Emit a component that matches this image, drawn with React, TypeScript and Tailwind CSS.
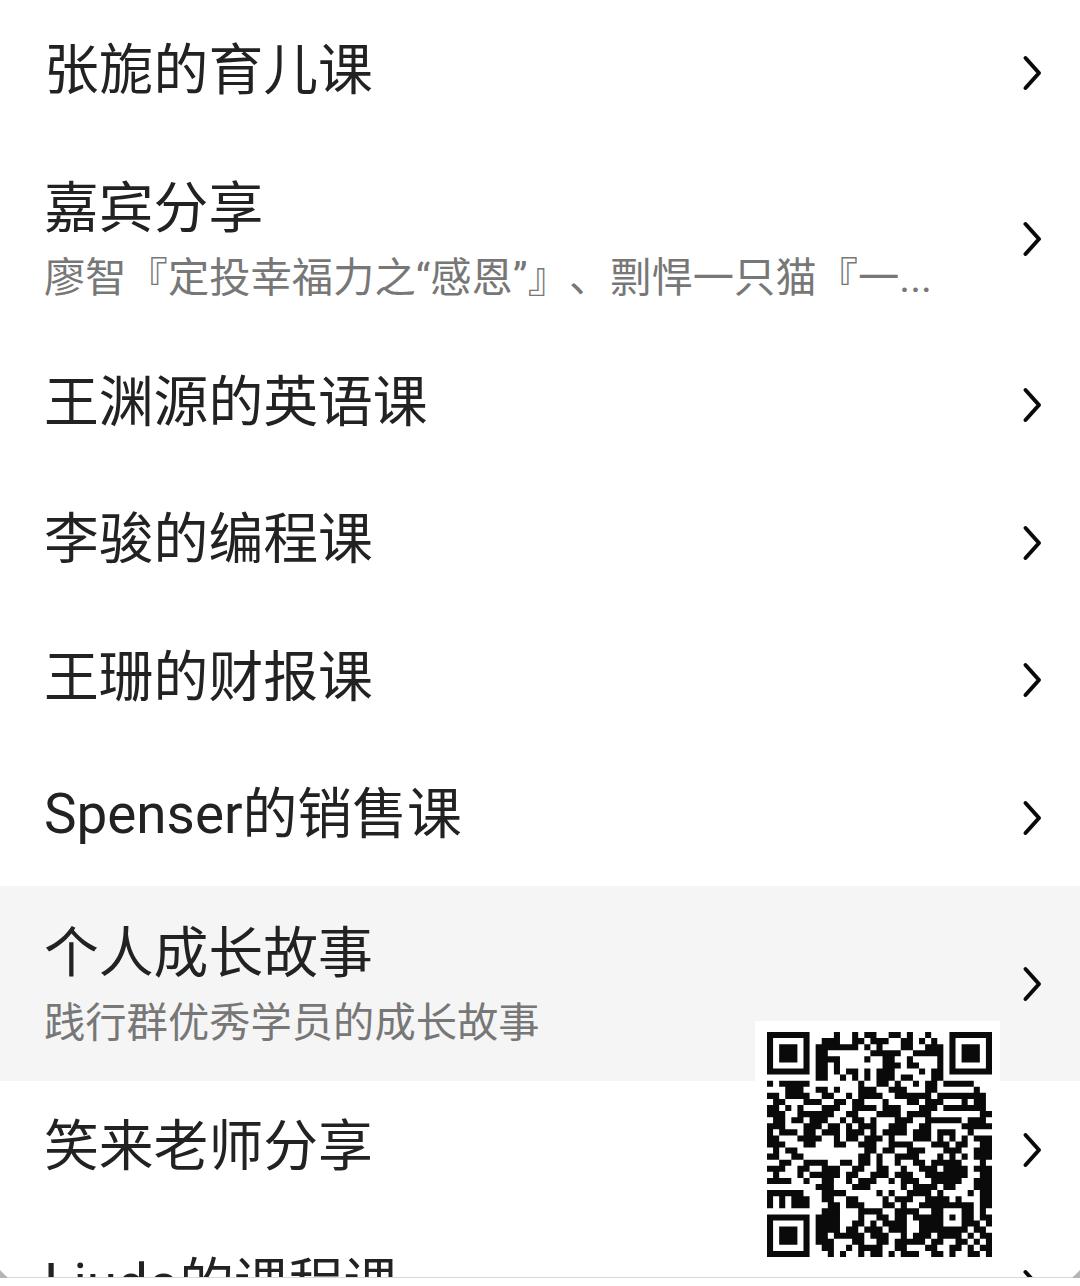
const qr = [
  "1111111000010010110011010010001111111",
  "1000001001110011011100110101001000001",
  "1011101011111110101000110011101011101",
  "1011101011000000011111001111101011101",
  "1011101011110000100110010000101011101",
  "1000001011010000000111011000101000001",
  "1111111011010110101110000101101111111",
  "0000000011001010101110110001100000000",
  "1011111000000001001101001011011111000",
  "0001110011010001110011100011000000100",
  "1101111001100101111001111110111111110",
  "0110001110011011000100011011100010110",
  "1101010001110011110111000111011111110",
  "1110011111100110001111011110000000011",
  "0110110111001011010001110011111101110",
  "1110001110110101110011100110000011111",
  "1011101101110111010111101110111001000",
  "1100011110010110111010001110101010111",
  "1110001100011001110011110001110110011",
  "0101100000000000110110011100011100111",
  "1100110000000001101001111000101010111",
  "0011001111001101101001001101111100010",
  "1110011001110011001100100111011110111",
  "0100010111110110011101110011111110011",
  "1111001001100101110010111001111100111",
  "0000000011100011100000101111011000111",
  "1111110001111000001010011110100001011",
  "1010111001100110000101110011110100011",
  "1010111000110111000110100111111111011",
  "0000000001110001111001111001100011010",
  "1111111011110001001101101111101011011",
  "1000001011110011010111100111100011101",
  "1011101011110110111011100111111110110",
  "1011101011011111011100101110111101011",
  "1011101011100011001101111101100110101",
  "1000001001100101111001100011001101011",
  "1111111000101001011010111001101001101",
];

const qrPath = qr
  .map((row, y) => {
    let d = "";
    let x = 0;
    while (x < row.length) {
      if (row[x] === "1") {
        let e = x;
        while (e < row.length && row[e] === "1") e++;
        d += "M" + x + " " + y + "H" + e + "V" + (y + 1) + "H" + x + "Z";
        x = e;
      } else {
        x++;
      }
    }
    return d;
  })
  .join("");

function Chevron() {
  return (
    <svg width="20" height="36" viewBox="0 0 20 36" fill="none" className="shrink-0 mt-[1px]">
      <path d="M3.5 3L17 18L3.5 33" stroke="#0a0a0a" strokeWidth="4" strokeLinecap="round" strokeLinejoin="round" />
    </svg>
  );
}

function Row({ title, sub, active }: { title: string; sub?: string; active?: boolean }) {
  return (
    <div
      className={
        "flex items-center justify-between pl-[44px] pr-[38px] shrink-0 " +
        (sub ? "h-[194.5px] " : "h-[137.5px] ") +
        (active ? "bg-[#f5f5f5]" : "bg-white")
      }
    >
      <div className={"flex flex-col " + (sub ? "mt-[9px]" : "-mt-[6px]")}>
        <div className="text-[54.8px] leading-[70px] text-[#222222] whitespace-nowrap">{title}</div>
        {sub && (
          <div className="text-[41.3px] leading-[70px] text-[#777777] whitespace-nowrap [text-spacing-trim:space-all]">
            {sub}
          </div>
        )}
      </div>
      <Chevron />
    </div>
  );
}

const rows = [
  { title: "张旎的育儿课" },
  { title: "嘉宾分享", sub: "廖智『定投幸福力之“感恩”』、剽悍一只猫『一..." },
  { title: "王渊源的英语课" },
  { title: "李骏的编程课" },
  { title: "王珊的财报课" },
  { title: "Spenser的销售课" },
  { title: "个人成长故事", sub: "践行群优秀学员的成长故事", active: true },
  { title: "笑来老师分享" },
  { title: "Liudo的课程课" },
];

export default function App() {
  return (
    <div className="relative w-[1080px] h-[1286px] overflow-hidden bg-white font-['Roboto','Noto_Sans_CJK_SC',sans-serif]">
      <div className="h-[1278px] overflow-hidden border-b border-[#d9d9d9] pt-[4px] flex flex-col">
        {rows.map((r) => (
          <Row key={r.title} {...r} />
        ))}
      </div>
      <div className="absolute left-0 top-[1270px] w-0 h-0 border-l-[8px] border-t-[8px] border-l-[#b5b5b5] border-t-transparent" />
      <div className="absolute right-0 top-[1270px] w-0 h-0 border-r-[8px] border-t-[8px] border-r-[#b5b5b5] border-t-transparent" />
      <div className="absolute left-[755px] top-[1021px] w-[245px] h-[239px] bg-white">
        <svg className="absolute left-[12px] top-[11px] blur-[0.5px]" width="225" height="225" viewBox="0 0 37 37">
          <path d={qrPath} fill="#0a0a0a" />
        </svg>
      </div>
    </div>
  );
}
